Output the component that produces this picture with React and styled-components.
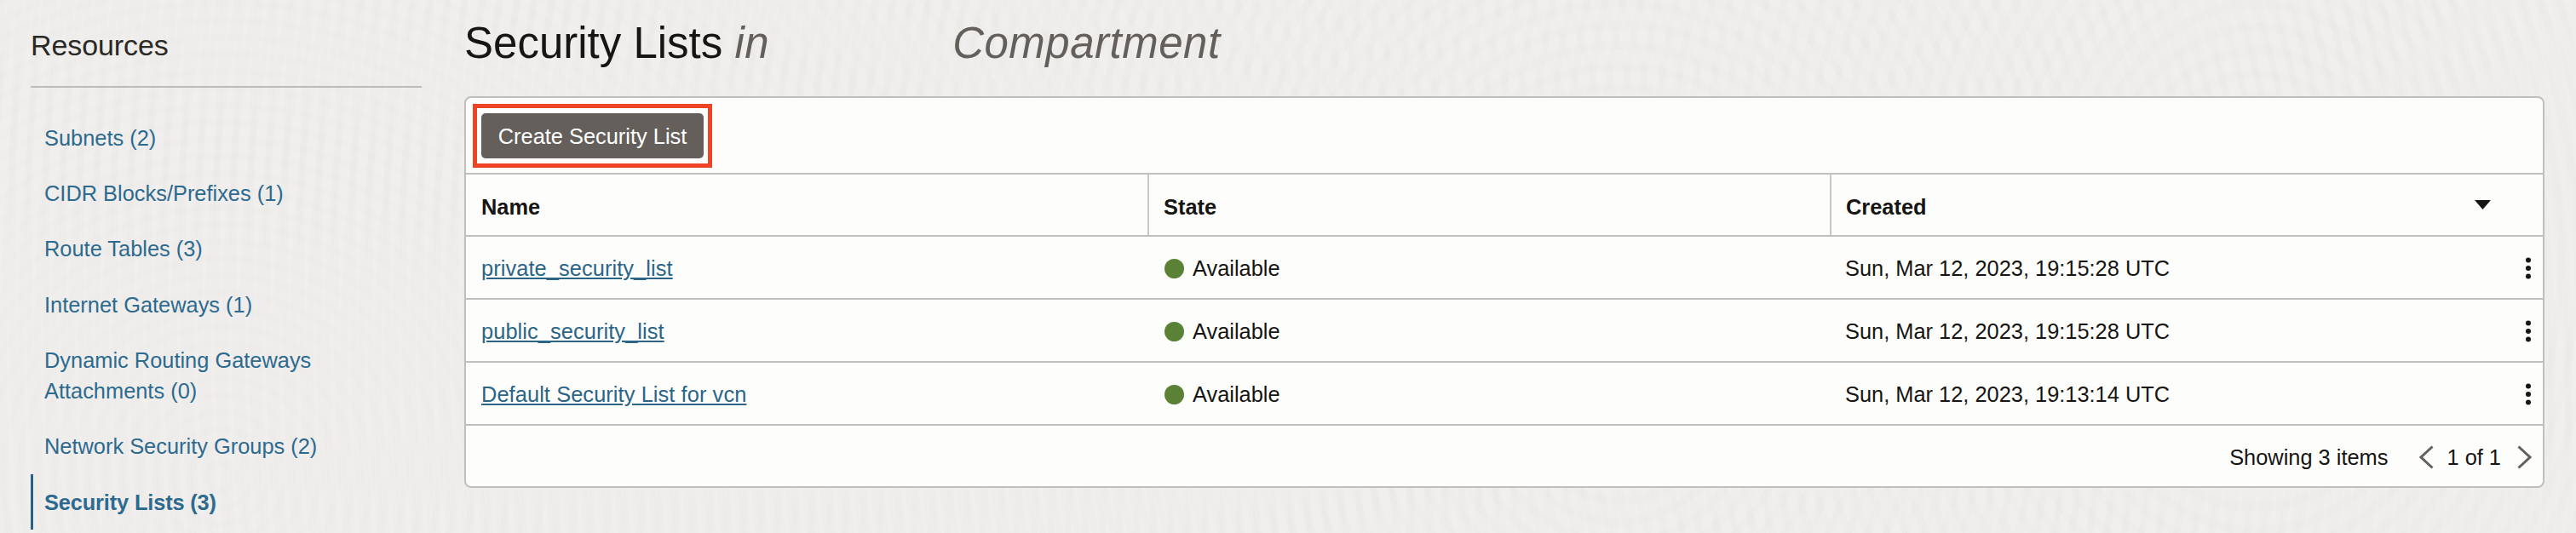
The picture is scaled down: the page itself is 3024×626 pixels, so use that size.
import React from 'react'
import styled, { createGlobalStyle } from 'styled-components'

const GlobalStyle = createGlobalStyle`
  html, body {
    margin: 0;
    padding: 0;
  }
  body {
    font-family: "Liberation Sans", Arial, sans-serif;
    color: #161513;
    background: #f1efed;
  }
`

const Page = styled.div`
  display: flex;
  width: 3024px;
  height: 626px;
  overflow: hidden;
  box-sizing: border-box;
  padding: 0 37px 0 36px;
  background-color: #f1efed;
  background-image:
    repeating-radial-gradient(ellipse 420px 520px at 1900px 420px, rgba(120, 115, 105, 0) 0 12px, rgba(120, 115, 105, 0.014) 12px 20px),
    repeating-radial-gradient(ellipse 380px 520px at 2650px 300px, rgba(120, 115, 105, 0) 0 12px, rgba(120, 115, 105, 0.014) 12px 20px),
    repeating-radial-gradient(circle at 260px 560px, rgba(120, 115, 105, 0) 0 12px, rgba(120, 115, 105, 0.012) 12px 20px);
`

const Sidebar = styled.aside`
  flex: 0 0 459px;
  margin-right: 50px;
`

const SidebarTitle = styled.h2`
  margin: 0 0 26px;
  height: 103px;
  box-sizing: border-box;
  padding-top: 32px;
  font-size: 34px;
  line-height: 42px;
  font-weight: 400;
  letter-spacing: -0.1px;
  color: #2b2926;
  border-bottom: 2px solid #bdbbb8;
`

const NavList = styled.ul`
  list-style: none;
  margin: 0;
  padding: 0;
`

const NavItem = styled.li`
  box-sizing: border-box;
  width: 459px;
  padding: 14.67px 40px 14.67px 13px;
  font-size: 25.4px;
  line-height: 36px;
  color: #2c6a8f;
  font-weight: ${p => (p.$active ? 700 : 400)};
  letter-spacing: ${p => (p.$active ? '-0.15px' : '0')};
  border-left: 3px solid ${p => (p.$active ? '#2c5f85' : 'transparent')};
`

const Main = styled.main`
  flex: 1;
  min-width: 0;
`

const Title = styled.h1`
  margin: 0;
  height: 113px;
  box-sizing: border-box;
  padding-top: 20px;
  font-size: 51px;
  line-height: 62px;
  font-weight: 400;
  white-space: nowrap;
  color: #161513;
`

const TitleNote = styled.em`
  color: #645f5a;
  font-weight: 400;
  letter-spacing: 0.5px;
  margin-left: ${p => p.$gap || 0}px;
`

const Card = styled.section`
  box-sizing: border-box;
  height: 460px;
  background: #fdfdfb;
  border: 2px solid #c0bfbc;
  border-radius: 8px;
`

const Toolbar = styled.div`
  box-sizing: border-box;
  height: 90px;
  padding: 7px 8px 0;
  border-bottom: 2px solid #c0bfbc;
`

const Highlight = styled.div`
  display: inline-flex;
  padding: 6px 5px;
  border: 5px solid #ee4324;
`

const PrimaryButton = styled.button`
  width: 261px;
  height: 53px;
  padding: 2px 0 0;
  border: 0;
  border-radius: 5px;
  background: #645f5a;
  color: #fff;
  font-family: inherit;
  font-size: 25.4px;
`

const Row = styled.div`
  display: grid;
  grid-template-columns: 800px 801px 1fr;
  box-sizing: border-box;
  height: ${p => (p.$head ? 73 : 74)}px;
  border-bottom: 2px solid #c0bfbc;
  font-size: 25.4px;
  color: #161513;
`

const Cell = styled.div`
  position: relative;
  display: flex;
  align-items: center;
  box-sizing: border-box;
  padding: ${p => (p.$head ? 5 : 3)}px 0 0 18px;
  ${p => p.$divided && 'border-left: 2px solid #c9c8c5; padding-left: 17px;'}
  ${p => p.$head && 'font-weight: 700;'}
`

const NameLink = styled.a`
  color: #2a6588;
  letter-spacing: 0.08px;
  text-decoration: underline;
`

const StatusDot = styled.span`
  width: 23px;
  height: 23px;
  margin: 0 10px 0 2px;
  border-radius: 50%;
  background: #5b8136;
`

const SortArrow = styled.svg`
  position: absolute;
  right: 61px;
  top: 30px;
  width: 19px;
  height: 11px;
`

const RowMenu = styled.svg`
  position: absolute;
  right: 13px;
  top: 24px;
  width: 8px;
  height: 26px;
`

const Footer = styled.div`
  display: flex;
  align-items: center;
  justify-content: flex-end;
  box-sizing: border-box;
  height: 71px;
  padding: 3px 13px 0 0;
  font-size: 25.4px;
  color: #161513;
`

const Pager = styled.div`
  display: flex;
  align-items: center;
  margin-left: 37px;
`

const PageText = styled.span`
  margin: 0 19px 0 15px;
`

const Chevron = styled.svg`
  width: 17px;
  height: 28px;
`

const navItems = [
  'Subnets (2)',
  'CIDR Blocks/Prefixes (1)',
  'Route Tables (3)',
  'Internet Gateways (1)',
  'Dynamic Routing Gateways Attachments (0)',
  'Network Security Groups (2)',
]

const rows = [
  { name: 'private_security_list', created: 'Sun, Mar 12, 2023, 19:15:28 UTC' },
  { name: 'public_security_list', created: 'Sun, Mar 12, 2023, 19:15:28 UTC' },
  { name: 'Default Security List for vcn', created: 'Sun, Mar 12, 2023, 19:13:14 UTC' },
]

export default function App() {
  return (
    <Page>
      <GlobalStyle />
      <Sidebar>
        <SidebarTitle>Resources</SidebarTitle>
        <NavList>
          {navItems.map(item => (
            <NavItem key={item}>{item}</NavItem>
          ))}
          <NavItem $active>Security Lists (3)</NavItem>
        </NavList>
      </Sidebar>
      <Main>
        <Title>
          Security Lists <TitleNote>in</TitleNote>
          <TitleNote $gap={215}>Compartment</TitleNote>
        </Title>
        <Card>
          <Toolbar>
            <Highlight>
              <PrimaryButton>Create Security List</PrimaryButton>
            </Highlight>
          </Toolbar>
          <Row $head>
            <Cell $head>Name</Cell>
            <Cell $head $divided>State</Cell>
            <Cell $head $divided>
              Created
              <SortArrow viewBox="0 0 19 11">
                <path d="M0 0h19L9.5 11z" fill="#161513" />
              </SortArrow>
            </Cell>
          </Row>
          {rows.map(row => (
            <Row key={row.name}>
              <Cell><NameLink href="#">{row.name}</NameLink></Cell>
              <Cell><StatusDot />Available</Cell>
              <Cell>
                {row.created}
                <RowMenu viewBox="0 0 8 26">
                  <circle cx="4" cy="3.5" r="3" fill="#161513" />
                  <circle cx="4" cy="13" r="3" fill="#161513" />
                  <circle cx="4" cy="22.5" r="3" fill="#161513" />
                </RowMenu>
              </Cell>
            </Row>
          ))}
          <Footer>
            Showing 3 items
            <Pager>
              <Chevron viewBox="0 0 17 28">
                <path d="M15.5 1.5 2 14l13.5 12.5" fill="none" stroke="#645f5a" strokeWidth="3" />
              </Chevron>
              <PageText>1 of 1</PageText>
              <Chevron viewBox="0 0 17 28">
                <path d="M1.5 1.5 15 14 1.5 26.5" fill="none" stroke="#645f5a" strokeWidth="3" />
              </Chevron>
            </Pager>
          </Footer>
        </Card>
      </Main>
    </Page>
  )
}
